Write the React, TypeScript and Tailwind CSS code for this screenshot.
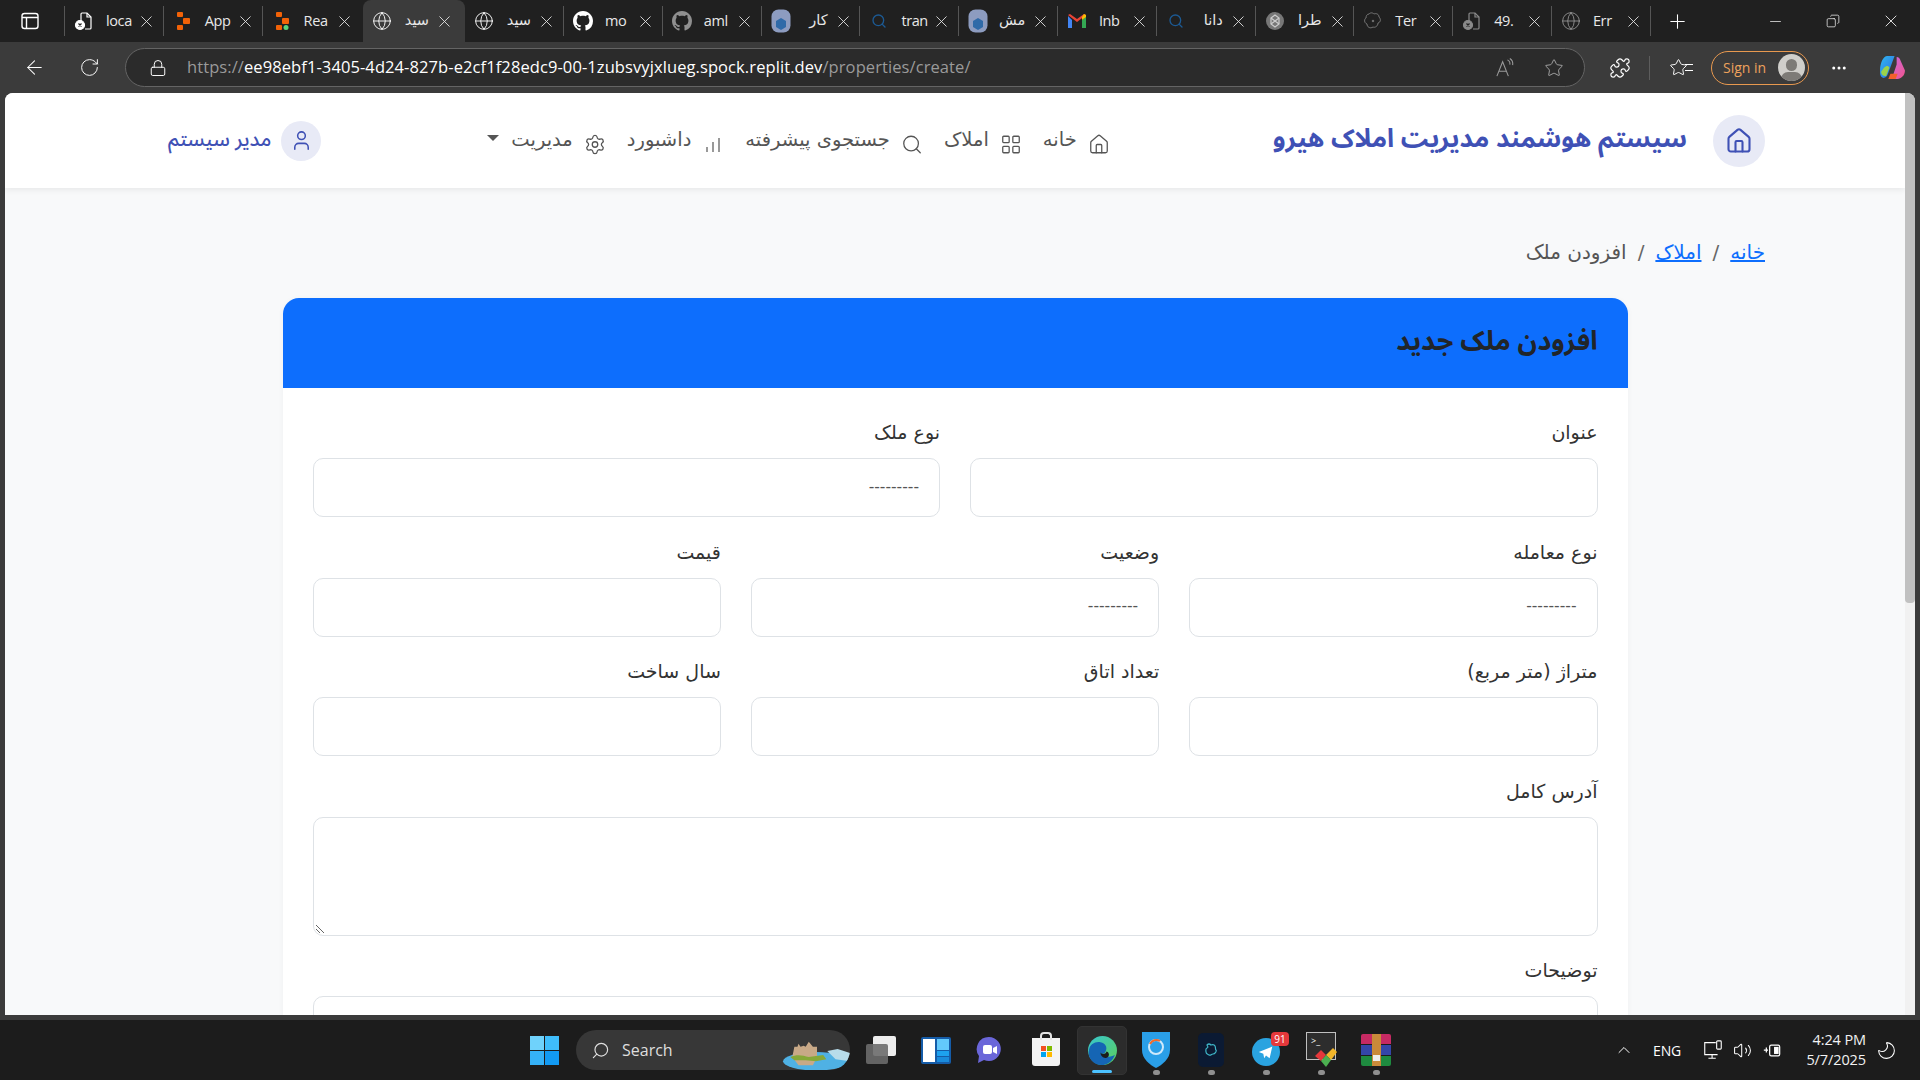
import { ChevronUp, Globe, House, LayoutGrid, Lock, Minus, MoreHorizontal, Plus, RotateCw, Search, Settings, Star, User, Volume2, X, ArrowLeft, Puzzle, Copy, Moon } from "lucide-react";
import type { ReactNode } from "react";

const chromeFont = "font-['Open_Sans','Noto_Sans',sans-serif]";
const pageFont = "font-['DejaVu_Sans','Noto_Sans',sans-serif]";
const headingFont = "font-['Noto_Sans_Arabic','Noto_Sans','DejaVu_Sans',sans-serif]";

function FileX({ dim }: { dim?: boolean }) {
  return (
    <svg viewBox="0 0 20 20" className="w-5 h-5" fill="none" stroke={dim ? "#8a8a8a" : "#fff"} strokeWidth="1.2">
      <path d="M8 2h5l4 4v11a1 1 0 0 1-1 1h-5" />
      <path d="M13 2v4h4" />
      <path d="M8 2a1 1 0 0 0-1 1v7" />
      <circle cx="6" cy="14" r="4.5" fill={dim ? "#8a8a8a" : "#fff"} />
      <path d="M4.5 12.5l3 3m0-3l-3 3" stroke="#222" />
    </svg>
  );
}

function ReplitIcon({ dot }: { dot?: boolean }) {
  return (
    <svg viewBox="0 0 16 20" className="w-4 h-5" fill="#f26207">
      <rect x="2" y="1" width="6" height="5" rx="1" />
      <rect x="8" y="7" width="7" height="6" rx="1" />
      <rect x="2" y="14" width="6" height="5" rx="1" />
      {dot && <circle cx="12" cy="16.5" r="2.5" fill="#58d47b" />}
    </svg>
  );
}

function GithubMark({ dim }: { dim?: boolean }) {
  return (
    <svg viewBox="0 0 16 16" className="w-5 h-5" fill={dim ? "#8f8f8f" : "#fff"}>
      <path d="M8 0C3.58 0 0 3.58 0 8c0 3.54 2.29 6.53 5.47 7.59.4.07.55-.17.55-.38 0-.19-.01-.82-.01-1.49-2.01.37-2.53-.49-2.69-.94-.09-.23-.48-.94-.82-1.13-.28-.15-.68-.52-.01-.53.63-.01 1.08.58 1.23.82.72 1.21 1.87.87 2.33.66.07-.52.28-.87.51-1.07-1.78-.2-3.64-.89-3.64-3.95 0-.87.31-1.59.82-2.15-.08-.2-.36-1.02.08-2.12 0 0 .67-.21 2.2.82.64-.18 1.32-.27 2-.27s1.36.09 2 .27c1.53-1.04 2.2-.82 2.2-.82.44 1.1.16 1.92.08 2.12.51.56.82 1.27.82 2.15 0 3.07-1.87 3.75-3.65 3.95.29.25.54.73.54 1.48 0 1.07-.01 1.93-.01 2.2 0 .21.15.46.55.38A8.01 8.01 0 0 0 16 8c0-4.42-3.58-8-8-8z" />
    </svg>
  );
}

function Thumb() {
  return (
    <svg viewBox="0 0 20 24" className="w-5 h-6">
      <rect x="0.5" y="0.5" width="19" height="23" rx="7" fill="#8d9cc0" />
      <path d="M5 12l5-3 5 3v6l-5 3-5-3z" fill="#2f6aa8" />
    </svg>
  );
}

function GmailIcon() {
  return (
    <svg viewBox="0 0 20 16" className="w-5 h-4">
      <path d="M1 3v12h4V7z" fill="#4285f4" />
      <path d="M19 3v12h-4V7z" fill="#34a853" />
      <path d="M1 2l9 7 9-7-2-1-7 5-7-5z" fill="#ea4335" />
      <path d="M17 1l2 1v2l-4 3V4z" fill="#fbbc04" />
    </svg>
  );
}

function Knot() {
  return (
    <svg viewBox="0 0 20 20" className="w-5 h-5" fill="none" strokeWidth="1.2">
      <circle cx="10" cy="10" r="9" fill="#777" />
      <path d="M6 7l4-3 4 3v6l-4 3-4-3z" stroke="#ccc" />
      <path d="M6 7l8 6M14 7l-8 6" stroke="#ccc" />
    </svg>
  );
}

function Blob() {
  return (
    <svg viewBox="0 0 20 20" className="w-5 h-5" fill="none" stroke="#777" strokeWidth="1">
      <path d="M6 3c2-2 4-1 5 0 2-1 5 0 5 3 2 2 2 5-1 6 0 3-3 5-5 4-3 2-6 0-6-3-3-1-3-5-1-6 0-2 1-4 3-4z" />
      <circle cx="10" cy="10" r="0.8" fill="#777" />
    </svg>
  );
}

const tabs: { icon: ReactNode; label: string; active?: boolean; arabic?: boolean; plain?: boolean }[] = [
  { icon: <FileX />, label: "loca" },
  { icon: <ReplitIcon />, label: "App" },
  { icon: <ReplitIcon dot />, label: "Rea" },
  { icon: <Globe size={20} strokeWidth={1.1} className="text-white" />, label: "سید", active: true, arabic: true },
  { icon: <Globe size={20} strokeWidth={1.1} className="text-white" />, label: "سید", arabic: true, plain: true },
  { icon: <GithubMark />, label: "mo" },
  { icon: <GithubMark dim />, label: "aml" },
  { icon: <Thumb />, label: "کار", arabic: true },
  { icon: <Search size={16} strokeWidth={2} className="text-[#1c5a94]" />, label: "tran" },
  { icon: <Thumb />, label: "مش", arabic: true },
  { icon: <GmailIcon />, label: "Inb" },
  { icon: <Search size={16} strokeWidth={2} className="text-[#1c5a94]" />, label: "دانا", arabic: true },
  { icon: <Knot />, label: "طرا", arabic: true },
  { icon: <Blob />, label: "Ter" },
  { icon: <FileX dim />, label: "49." },
  { icon: <Globe size={20} strokeWidth={1} className="text-[#9a9a9a]" />, label: "Err" },
];

function Tab({ tab }: { tab: (typeof tabs)[number] }) {
  const frame = tab.active
    ? "bg-[#3b3b3b] rounded-t-lg h-[42px] w-[102px] ml-[2.6px]"
    : tab.plain
      ? "h-[30px] w-[98px]"
      : "h-[30px] w-[98.8px] border-l border-[#555]";
  return (
    <div className={`flex items-center shrink-0 pl-[9px] ${frame}`}>
      <span className="w-5 flex justify-center shrink-0">{tab.icon}</span>
      <span
        dir={tab.arabic ? "rtl" : "ltr"}
        className={`ml-[12px] w-[25px] whitespace-nowrap shrink-0 text-[14.5px] tracking-[-0.4px] text-[#e8e8e8] ${tab.arabic ? `${pageFont} text-[13px]` : ""}`}
      >
        {tab.label}
      </span>
      <X size={19} strokeWidth={1.1} className="ml-[6px] text-[#e8e8e8] shrink-0" />
    </div>
  );
}

function BrowserChrome() {
  return (
    <div className={`shrink-0 ${chromeFont}`}>
      <div className="flex items-center h-[42px] bg-[#202020] text-white">
        <div className="w-[64px] flex justify-center shrink-0">
          <svg viewBox="0 0 20 20" className="w-5 h-5 -ml-[4px]" fill="none" stroke="#fff" strokeWidth="1.4">
            <rect x="2" y="2.5" width="16" height="15" rx="2.5" />
            <path d="M2 6.5h16M6.5 6.5v11" />
          </svg>
        </div>
        {tabs.map((tab, i) => (
          <Tab key={i} tab={tab} />
        ))}
        <div className="border-l border-[#555] h-[30px] flex items-center pl-[15px] shrink-0">
          <Plus size={23} strokeWidth={1.1} />
        </div>
        <div className="flex items-center justify-end flex-1">
          <span className="w-[58px] flex justify-center"><Minus size={17} strokeWidth={1} /></span>
          <span className="w-[58px] flex justify-center"><Copy size={14} strokeWidth={1.2} className="-scale-x-100" /></span>
          <span className="w-[58px] flex justify-center"><X size={20} strokeWidth={1} /></span>
        </div>
      </div>
      <div className="flex items-center h-[51px] bg-[#3b3b3b] text-white">
        <ArrowLeft size={23} strokeWidth={1.1} className="ml-[23px]" />
        <RotateCw size={21} strokeWidth={1.1} className="ml-[33px]" />
        <div className="ml-[25px] w-[1460px] h-[39px] rounded-full bg-[#2b2b2b] border border-[#646464] flex items-center pl-[23px] pr-[20px]">
          <Lock size={18} strokeWidth={1.3} />
          <div className="ml-[20px] flex-1 text-[16.5px] tracking-[0.09px] whitespace-nowrap">
            <span className="text-[#9a9a9a]">https://</span>
            <span className="text-white">ee98ebf1-3405-4d24-827b-e2cf1f28edc9-00-1zubsvyjxlueg.spock.replit.dev</span>
            <span className="text-[#9a9a9a]">/properties/create/</span>
          </div>
          <svg viewBox="0 0 22 22" className="w-[21px] h-[21px] mr-[28px]" fill="none" stroke="#9a9a9a" strokeWidth="1.1">
            <path d="M2 20L8 5l6 15M4.500 15h7" />
            <path d="M13 3c2 1 3 3 2.500 5M15.500 1.500c2.500 1.500 3.500 4 3 7" />
          </svg>
          <Star size={20} strokeWidth={1.1} className="text-[#aaa]" />
        </div>
        <Puzzle size={22} strokeWidth={1.3} className="ml-[24px]" />
        <div className="ml-[18px] w-px h-6 bg-[#5d5d5d]" />
        <div className="ml-[19px] relative">
          <Star size={19} strokeWidth={1.2} />
          <span className="absolute -right-[5px] top-[6px] w-[8px] h-[7px] border-y border-white" />
        </div>
        <div className="ml-[23px] w-[98px] h-[34px] rounded-full border border-[#e8994f] flex items-center justify-between pl-[11px] pr-[3px] text-[#eda25d] text-[14px]">
          <span>Sign in</span>
          <span className="w-[27px] h-[27px] rounded-full bg-[#d0cfcb] relative overflow-hidden">
            <span className="absolute left-[8px] top-[5px] w-[11px] h-[12px] rounded-full bg-[#7d7b77]" />
            <span className="absolute left-[3px] top-[18px] w-[21px] h-[14px] rounded-full bg-[#7d7b77]" />
          </span>
        </div>
        <MoreHorizontal size={18} strokeWidth={2} className="ml-[21px]" />
        <svg viewBox="0 0 26 26" className="w-[27px] h-[27px] ml-[31px]">
          <defs>
            <linearGradient id="copilotA" x1="0" y1="0" x2="1" y2="1">
              <stop offset="0" stopColor="#2fb8f0" />
              <stop offset="1" stopColor="#2f6ae0" />
            </linearGradient>
            <linearGradient id="copilotB" x1="0" y1="0" x2="1" y2="1">
              <stop offset="0" stopColor="#c86ae8" />
              <stop offset="1" stopColor="#f0558c" />
            </linearGradient>
          </defs>
          <path d="M8 2h7l-6 16c-1 3-2 5-5 5-3-1-3-4-3-7 0-7 3-14 7-14z" fill="url(#copilotA)" />
          <path d="M5 13c2-2 4-2 5 0l-3 8c-2 1-5-1-5-4z" fill="#9bd24a" />
          <path d="M17 3c2 0 3 1 4 4l4 9c0 5-4 8-7 8H9c3 0 4-2 5-5l3-9z" fill="url(#copilotB)" />
          <path d="M11 19l7 0-2 5H9z" fill="#f2602c" />
        </svg>
      </div>
    </div>
  );
}

function NavItem({ icon, label, caret }: { icon: ReactNode; label: string; caret?: boolean }) {
  return (
    <a className="flex items-center text-[#555] text-[19.5px]">
      <span className="w-[22px] h-[22px] flex items-center justify-center mt-[7px] text-[#555]">{icon}</span>
      <span className="mr-[11px] -mt-[2px] whitespace-nowrap">{label}</span>
      {caret && <span className="mr-[12px] w-0 h-0 border-x-[6px] border-x-transparent border-t-[6px] border-t-[#555] -mt-[5px]" />}
    </a>
  );
}

function Field({ label, kind = "input", height = "h-[59px]" }: { label: string; kind?: "input" | "select" | "area"; height?: string }) {
  return (
    <label className="block">
      <span className="block h-[38px] leading-[24px] text-[19px] text-[#333]">{label}</span>
      <div className={`relative w-full ${height} bg-white border border-[#dee2e6] rounded-[10px] flex items-center px-[20px] text-[#555] text-[15.500px]`}>
        {kind === "select" && <span>---------</span>}
        {kind === "area" && (
          <svg viewBox="0 0 10 10" className="absolute left-[1px] bottom-[1px] w-[10px] h-[10px]" stroke="#666" strokeWidth="1">
            <path d="M1 1l8 8M1 5l4 4" />
          </svg>
        )}
      </div>
    </label>
  );
}

function PropertyPage() {
  return (
    <div dir="rtl" className={`flex-1 min-w-0 bg-[#f8f9fa] ${pageFont}`}>
      <header className="h-[95px] bg-white shadow-[0_2px_6px_rgba(0,0,0,0.07)] flex items-center pr-[140px] pl-[163px]">
        <div className="w-[52px] h-[52px] rounded-full bg-[#e8eaf6] flex items-center justify-center shrink-0">
          <House size={28} strokeWidth={1.8} className="text-[#3f51b5]" />
        </div>
        <div className={`mr-[26px] -mt-[2px] text-[25.8px] font-bold text-[#3f51b5] whitespace-nowrap ${headingFont}`}>سیستم هوشمند مدیریت املاک هیرو</div>
        <nav className="mr-[163px] flex items-center gap-[21px]">
          <NavItem icon={<House size={23} strokeWidth={1.4} />} label="خانه" />
          <NavItem icon={<LayoutGrid size={23} strokeWidth={1.4} />} label="املاک" />
          <NavItem icon={<Search size={23} strokeWidth={1.4} />} label="جستجوی پیشرفته" />
          <NavItem
            icon={
              <svg viewBox="0 0 20 20" className="w-5 h-5" fill="none" stroke="currentColor" strokeWidth="1.2">
                <path d="M4 18v-5M10 18V8M16 18V4" />
              </svg>
            }
            label="داشبورد"
          />
          <NavItem icon={<Settings size={23} strokeWidth={1.4} />} label="مدیریت" caret />
        </nav>
        <div className="mr-auto flex items-center gap-[10px] shrink-0">
          <div className="w-10 h-10 rounded-full bg-[#e8eaf6] flex items-center justify-center">
            <User size={23} strokeWidth={1.6} className="text-[#3f51b5]" />
          </div>
          <span className={`text-[20px] -mt-[2px] text-[#3f51b5] font-medium whitespace-nowrap ${headingFont}`}>مدیر سیستم</span>
        </div>
      </header>

      <nav className="px-[140px] pt-[49px] h-[110px] flex items-start text-[20px] text-[#555]">
        <a className="text-[#0d6efd] underline">خانه</a>
        <span className="mx-[11px] text-[#666]">/</span>
        <a className="text-[#0d6efd] underline">املاک</a>
        <span className="mx-[11px] text-[#666]">/</span>
        <span>افزودن ملک</span>
      </nav>

      <section className="w-[1345px] mx-auto bg-white rounded-t-[16px] shadow-[0_1px_6px_rgba(0,0,0,0.04)]">
        <div className="h-[90px] bg-[#0d6efd] rounded-t-[16px] px-[30px] flex items-center">
          <h1 className={`text-[26.8px] -mt-[2px] font-bold text-[#212529] ${headingFont}`}>افزودن ملک جدید</h1>
        </div>
        <form className="px-[30px] pt-[32px] flex flex-col gap-[22.500px]">
          <div className="grid grid-cols-2 gap-x-[30px]">
            <Field label="عنوان" />
            <Field label="نوع ملک" kind="select" />
          </div>
          <div className="grid grid-cols-3 gap-x-[30px]">
            <Field label="نوع معامله" kind="select" />
            <Field label="وضعیت" kind="select" />
            <Field label="قیمت" />
          </div>
          <div className="grid grid-cols-3 gap-x-[30px]">
            <Field label="متراژ (متر مربع)" />
            <Field label="تعداد اتاق" />
            <Field label="سال ساخت" />
          </div>
          <Field label="آدرس کامل" kind="area" height="h-[119px]" />
          <Field label="توضیحات" kind="area" height="h-[119px]" />
        </form>
      </section>
    </div>
  );
}

function AppSlot({ children, className = "" }: { children: ReactNode; className?: string }) {
  return (
    <div className={`w-[55px] h-[60px] relative flex items-center justify-center shrink-0 ${className}`}>
      {children}
      <span className="absolute bottom-[5px] left-[24px] w-[7px] h-[5px] rounded-full bg-[#8f8f8f]" />
    </div>
  );
}

function Taskbar() {
  return (
    <div className={`h-[60px] shrink-0 bg-[#1c1c1c] flex items-center relative ${chromeFont}`}>
      <div className="ml-[530px] w-[29px] h-[29px] grid grid-cols-2 gap-px shrink-0">
        <span className="bg-[#6fd2fb]" />
        <span className="bg-[#3fbdfb]" />
        <span className="bg-[#35b1f7]" />
        <span className="bg-[#129af3]" />
      </div>
      <div className="ml-[17px] w-[274px] h-[40px] rounded-full bg-[#373737] flex items-center pl-[15px] relative overflow-hidden text-[#dedede] text-[16px] shrink-0">
        <Search size={19} strokeWidth={1.5} className="-scale-x-100" />
        <span className="ml-[12px]">Search</span>
        <svg viewBox="0 0 66 32" className="absolute right-0 top-[6px] w-[68px] h-[34px]">
          <ellipse cx="33" cy="24" rx="32" ry="9" fill="#4fb1e4" />
          <path d="M10 20l2-10h3l1-3 2 3 3-1 2 1 3-5 4 5h4v10l-4 8H16z" fill="#c8a987" />
          <path d="M8 20c6-3 12-2 18 0l14-2 3 4-10 2-10-1H12z" fill="#86a839" />
          <path d="M44 14l10-2 12 4v8l-14-2z" fill="#b7dcea" />
        </svg>
      </div>
      {/* task view */}
      <div className="ml-[16px] w-[30px] h-[28px] relative shrink-0">
        <span className="absolute right-0 top-0 w-[23px] h-[20px] rounded-[2px] bg-[#ededed]" />
        <span className="absolute left-0 bottom-0 w-[22px] h-[20px] rounded-[2px] bg-[#6b6b6b]/90" />
      </div>
      {/* widgets */}
      <div className="ml-[25px] w-[30px] h-[27px] flex gap-[2px] bg-[#155ca8] p-[2px] rounded-[2px] shrink-0">
        <span className="w-[12px] bg-white" />
        <span className="flex-1 flex flex-col gap-px">
          <span className="flex-1 bg-[#63c9fb]" />
          <span className="h-[5px] bg-[#1da1ef]" />
          <span className="h-[5px] bg-[#1a8bdc]" />
        </span>
      </div>
      {/* meet */}
      <svg viewBox="0 0 26 28" className="ml-[25px] w-[26px] h-[28px] shrink-0">
        <path d="M13 1a12 12 0 1 1-5 23l-6 3 1-7A12 12 0 0 1 13 1z" fill="#6a66d9" />
        <rect x="7" y="9" width="9" height="9" rx="2" fill="#fff" />
        <path d="M17 12l4-2v8l-4-2z" fill="#fff" />
      </svg>
      {/* store */}
      <div className="ml-[30px] w-[28px] h-[28px] relative bg-[#f3f3f3] rounded-b-[3px] mt-[4px] shrink-0">
        <span className="absolute left-[8px] -top-[6px] w-[12px] h-[8px] border-2 border-b-0 border-[#e3e3e3] rounded-t" />
        <span className="absolute left-[9px] top-[8px] grid grid-cols-2 gap-px w-[11px] h-[11px]">
          <span className="bg-[#f25022]" />
          <span className="bg-[#7fba00]" />
          <span className="bg-[#00a4ef]" />
          <span className="bg-[#ffb900]" />
        </span>
      </div>
      {/* edge */}
      <div className="ml-[17px] w-[50px] h-[49px] rounded-[5px] bg-[#2c2c2c] border border-[#333] flex items-center justify-center relative shrink-0">
        <svg viewBox="0 0 30 30" className="w-[31px] h-[31px]">
          <defs>
            <linearGradient id="edgeA" x1="0" y1="0" x2="1" y2="1">
              <stop offset="0" stopColor="#37c6d0" />
              <stop offset="1" stopColor="#5ccf5a" />
            </linearGradient>
          </defs>
          <circle cx="15" cy="15" r="14" fill="url(#edgeA)" />
          <path d="M2 14c1-5 6-8 11-7 5 1 7 5 5 9-1 3-5 3-6 1 4 5 10 5 15 2-2 6-7 10-13 10C6 29 0 22 2 14z" fill="#1565b4" />
          <path d="M13 17c1 2 5 2 6-1 3 1 3 5 0 6-3 1-6-2-6-5z" fill="#1c1c1c" />
        </svg>
        <span className="absolute bottom-[1px] left-[14px] w-[20px] h-[3px] rounded-full bg-[#4cc2ff]" />
      </div>
      {/* hotspot shield */}
      <AppSlot className="ml-[1.500px]">
        <svg viewBox="0 0 28 36" className="w-[28px] h-[36px]">
          <path d="M0 0h28v18c0 9-8 15-14 18C8 33 0 27 0 18z" fill="#2a9fe8" />
          <circle cx="14" cy="15" r="7" fill="none" stroke="#cfe9fb" strokeWidth="2" />
          <path d="M8 12a7 7 0 0 1 10-3" fill="none" stroke="#f06a2b" strokeWidth="2" />
        </svg>
      </AppSlot>
      <AppSlot>
        <div className="w-[26px] h-[34px] rounded-[5px] bg-[#0b1a33] flex items-center justify-center">
          <svg viewBox="0 0 16 16" className="w-[16px] h-[16px]" fill="none" stroke="#3fb6c8" strokeWidth="1.2">
            <path d="M4 3c2-2 4 0 4 0s3-1 4 1 0 3 1 4-1 4-3 4-2 2-4 1-3-1-3-3-1-3 1-4 0-2 0-3z" />
          </svg>
        </div>
      </AppSlot>
      <AppSlot>
        <div className="relative w-[28px] h-[28px] rounded-full bg-[#2aa3e0] flex items-center justify-center mt-[4px]">
          <svg viewBox="0 0 20 20" className="w-[18px] h-[18px]" fill="#fff">
            <path d="M2 10l15-6-3 13-4-3-2 3-1-5z" />
          </svg>
          <span className="absolute -right-[9px] -top-[6px] w-[18px] h-[14px] rounded-[4px] bg-[#e5383b] text-white text-[10px] leading-[14px] text-center">91</span>
        </div>
      </AppSlot>
      <AppSlot>
        <div className="relative w-[30px] h-[36px]">
          <div className="w-[30px] h-[28px] bg-[#2d2d2d] border border-[#c0c0c0] text-[9px] leading-[10px] pl-[4px] pt-[3px] text-white">&gt;_</div>
          <svg viewBox="0 0 22 24" className="absolute right-[-1px] bottom-0 w-[22px] h-[24px]">
            <path d="M0 12l6-6 5 5-5 6z" fill="#e5383b" />
            <path d="M11 11l7-7 4 4-6 8z" fill="#f2b52a" />
            <path d="M6 17l5-6 5 5-5 7z" fill="#4caf50" />
          </svg>
        </div>
      </AppSlot>
      <AppSlot>
        <div className="relative w-[30px] h-[32px] flex flex-col gap-px rounded-[2px] overflow-hidden">
          <span className="flex-1 bg-[#c62a63]" />
          <span className="flex-1 bg-[#3446a8]" />
          <span className="flex-1 bg-[#1e8a3f]" />
          <span className="absolute left-[11px] top-0 bottom-0 w-[9px] bg-[#c98a3a]" />
          <span className="absolute left-[12px] top-[21px] w-[7px] h-[6px] bg-[#eee]" />
        </div>
      </AppSlot>

      <div className="absolute right-0 top-0 h-full flex items-center text-white">
        <ChevronUp size={20} strokeWidth={1.2} className="mr-[19px]" />
        <span className="text-[14px] w-[28px] text-center mr-[21px] tracking-[-0.2px]">ENG</span>
        <svg viewBox="0 0 24 24" className="w-[22px] h-[22px] mr-[8.500px]" fill="none" stroke="#fff" strokeWidth="1.2">
          <path d="M15 4H3v13h14M7 21h8M11 17v4" />
          <rect x="16" y="2" width="5" height="9" rx="1" />
        </svg>
        <Volume2 size={19} strokeWidth={1.3} className="mr-[11.500px]" />
        <svg viewBox="0 0 24 24" className="w-[20px] h-[20px] mr-[13px]" fill="none" stroke="#fff" strokeWidth="1.5">
          <path d="M1 12h5M4 9v6" />
          <rect x="8" y="6" width="12" height="13" rx="2" />
          <rect x="14" y="9" width="4" height="7" fill="#fff" />
        </svg>
        <div className="w-[70px] text-right text-[14.5px] leading-[20px] tracking-[-0.1px] text-[#f2f2f2] whitespace-nowrap">
          <div>4:24 PM</div>
          <div>5/7/2025</div>
        </div>
        <Moon size={21} strokeWidth={1.2} className="ml-[10px] mr-[23px] -scale-x-100" />
      </div>
    </div>
  );
}

export default function App() {
  return (
    <div className="w-screen h-screen overflow-hidden flex flex-col bg-[#3b3b3b]">
      <BrowserChrome />
      <div className="h-[922px] flex pl-[5px] pr-[5px] overflow-hidden shrink-0">
        <div className="flex-1 min-w-0 overflow-hidden rounded-tl-lg flex">
          <PropertyPage />
        </div>
        <div className="w-[10px] bg-[#f1f1f1] shrink-0 rounded-tr-lg overflow-hidden">
          <div className="w-[10px] h-[510px] rounded-b-[4px] bg-[#c1c1c1]" />
        </div>
      </div>
      <div className="h-[5px] shrink-0" />
      <Taskbar />
    </div>
  );
}
